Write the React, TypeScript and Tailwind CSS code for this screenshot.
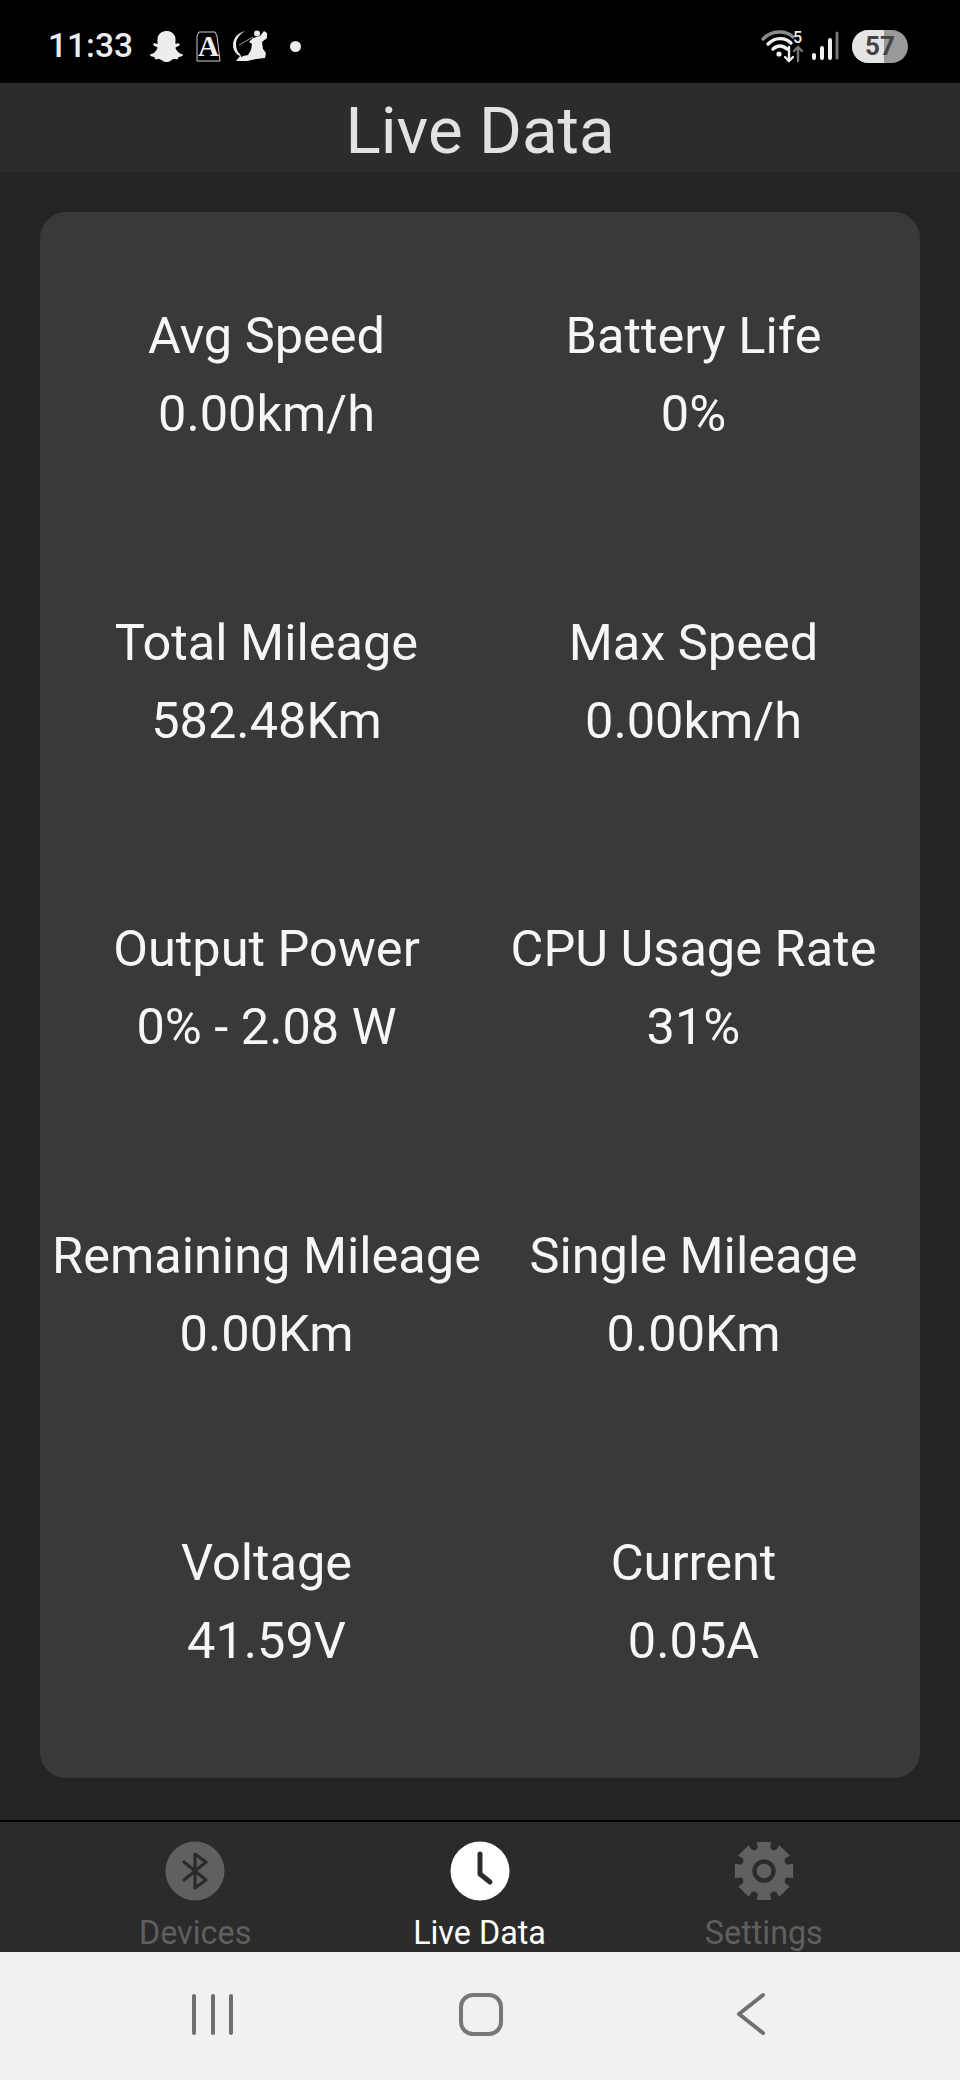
import React from "react";
import { FaSnapchatGhost } from "react-icons/fa";

const rows: [string, string, string, string][] = [
  ["Avg Speed", "0.00km/h", "Battery Life", "0%"],
  ["Total Mileage", "582.48Km", "Max Speed", "0.00km/h"],
  ["Output Power", "0% - 2.08 W", "CPU Usage Rate", "31%"],
  ["Remaining Mileage", "0.00Km", "Single Mileage", "0.00Km"],
  ["Voltage", "41.59V", "Current", "0.05A"],
];

function Cell({ label, value }: { label: string; value: string }) {
  return (
    <div className="flex h-[306.7px] flex-col items-center whitespace-nowrap pt-[67px] text-[50.5px] leading-[78px] text-[#f6f6f6]">
      <div>{label}</div>
      <div>{value}</div>
    </div>
  );
}

function Wifi() {
  return (
    <svg width="42" height="38" viewBox="0 0 42 38" fill="none" strokeLinecap="round">
      <path d="M2 12C11 3 25 3 32 10" stroke="#8a8a8a" strokeWidth="3.4" />
      <path d="M7 17C14 10 24 10 30 16" stroke="#f0f0f0" strokeWidth="3.4" />
      <path d="M12 22C16 18 22 18 26 22" stroke="#f0f0f0" strokeWidth="3.4" />
      <circle cx="18" cy="27" r="2.6" fill="#f0f0f0" />
      <path d="M28 20V34M24 30l4 4 4-4" stroke="#f0f0f0" strokeWidth="2.4" />
      <path d="M37 34V20M33 24l4-4 4 4" stroke="#777" strokeWidth="2.4" />
    </svg>
  );
}

function Golfer() {
  return (
    <svg width="35" height="32" viewBox="0 0 35 32" fill="#ededed">
      <path d="M12 1C4 3 0 9 0 15C0 20 3 24 7 26L3 31L10 31L7 24C4 22 3 18 3 14C3 9 7 4 12 1Z" />
      <path d="M20 8L27 6L31 1L34 3L34 8L29 12L30 19L33 23L32 28L23 29L14 31L4 31L10 26L15 25L18 20L19 14L16 12Z" />
      <circle cx="24" cy="3.5" r="3" />
      <path d="M6 15L20 7" stroke="#bbb" strokeWidth="0.8" />
    </svg>
  );
}

function gearPath(): string {
  const cx = 30;
  const cy = 30;
  const pts: string[] = [];
  const pt = (r: number, deg: number) => {
    const a = ((deg - 90) * Math.PI) / 180;
    return `${(cx + r * Math.cos(a)).toFixed(2)} ${(cy + r * Math.sin(a)).toFixed(2)}`;
  };
  for (let i = 0; i < 8; i++) {
    const c = i * 45;
    pts.push(pt(22.5, c - 22));
    pts.push(pt(24, c - 15));
    pts.push(pt(30, c - 14));
    pts.push(pt(30, c + 14));
    pts.push(pt(24, c + 15));
    pts.push(pt(22.5, c + 22));
  }
  const outer = "M" + pts.join("L") + "Z";
  return `${outer} M30 18.3a11.7 11.7 0 1 0 0.01 0Z M30 22.7a7.3 7.3 0 1 1-0.01 0Z`;
}

function NavItem({ icon, label, active }: { icon: React.ReactNode; label: string; active?: boolean }) {
  return (
    <div className="flex h-full flex-col items-center pt-[19px]">
      <div className="flex h-[60px] items-center justify-center">{icon}</div>
      <div className={`mt-[14px] text-[32.3px] leading-[36px] whitespace-nowrap ${active ? "text-white" : "text-[#5f5f5f]"}`}>{label}</div>
    </div>
  );
}

export default function App() {
  return (
    <div className="flex h-[2080px] w-[960px] flex-col overflow-hidden bg-[#242424] font-['Roboto',sans-serif]">
      <div className="flex h-[83px] shrink-0 items-center justify-between bg-black pl-[48px] pr-[52px] pt-[9px] text-[#ededed]">
        <div className="flex items-center">
          <span className="text-[33.5px] font-medium leading-none">11:33</span>
          <FaSnapchatGhost className="ml-[17px] text-[33px]" />
          <span className="relative ml-[13px] flex h-[31px] w-[25px] items-center justify-center font-['Liberation_Serif',serif] text-[29px] font-bold leading-none">
            <svg className="absolute inset-0" width="25" height="31" viewBox="0 0 25 31" fill="none">
              <path d="M3 1H19L21 5L24 30H1V5Z" stroke="#cfcfcf" strokeWidth="1" />
            </svg>
            A
          </span>
          <span className="ml-[12px] flex"><Golfer /></span>
          <span className="ml-[22px] h-[11px] w-[11px] rounded-full bg-[#ededed]" />
        </div>
        <div className="flex items-center">
          <div className="relative flex">
            <Wifi />
            <span className="absolute right-[1px] top-[3px] text-[16px] font-medium leading-none">5</span>
          </div>
          <svg className="ml-[8px]" width="28" height="30" viewBox="0 0 28 30" strokeLinecap="round">
            <path d="M3 24V27" stroke="#f0f0f0" strokeWidth="4" />
            <path d="M11 17V27" stroke="#f0f0f0" strokeWidth="4" />
            <path d="M19 9V27" stroke="#f0f0f0" strokeWidth="4" />
            <path d="M26 2V27" stroke="#777" strokeWidth="3" />
          </svg>
          <div className="relative ml-[13px] flex h-[33px] w-[56px] items-center justify-center overflow-hidden rounded-full bg-[#9a9a9a] text-[#444]">
            <div className="absolute bottom-0 left-0 top-0 w-[32px] bg-[#e4e4e4]" />
            <span className="relative text-[26px] font-bold leading-none">57</span>
          </div>
        </div>
      </div>

      <div className="flex h-[89px] shrink-0 items-center justify-center bg-[#2c2c2c] pt-[6px] text-[65.5px] leading-none text-[#e2e2e2]">Live Data</div>

      <div className="flex h-[1648px] shrink-0 flex-col px-[40px] pt-[40px]">
        <div className="grid h-[1566px] grid-cols-2 content-start rounded-[26px] bg-[#393939] px-[13px] pt-[18px]">
          {rows.map((r) => (
            <React.Fragment key={r[0]}>
              <Cell label={r[0]} value={r[1]} />
              <Cell label={r[2]} value={r[3]} />
            </React.Fragment>
          ))}
        </div>
      </div>

      <div className="grid h-[132px] shrink-0 grid-cols-3 border-t-2 border-t-black bg-[#2b2b2b] pl-[53px] pr-[54px]">
        <NavItem
          label="Devices"
          icon={
            <svg width="60" height="60" viewBox="0 0 60 60" fill="none">
              <circle cx="30" cy="30" r="29.5" fill="#606060" />
              <path d="M19 21L41 39L30 47V13L41 21L19 39" stroke="#2b2b2b" strokeWidth="3.2" strokeLinecap="round" strokeLinejoin="round" />
            </svg>
          }
        />
        <NavItem
          active
          label="Live Data"
          icon={
            <svg className="ml-[2px]" width="60" height="60" viewBox="0 0 60 60" fill="none">
              <circle cx="30" cy="30" r="29.5" fill="#fff" />
              <path d="M30 13V33L40 41" stroke="#2b2b2b" strokeWidth="5" strokeLinecap="round" strokeLinejoin="round" />
            </svg>
          }
        />
        <NavItem
          label="Settings"
          icon={
            <svg width="60" height="60" viewBox="0 0 60 60">
              <path fillRule="evenodd" fill="#606060" d={gearPath()} />
            </svg>
          }
        />
      </div>

      <div className="flex flex-1 items-start bg-[#f1f1f4] pl-[192px] pt-[40px]">
        <div className="flex items-center">
          <div className="flex h-[41px] w-[41px] justify-between">
            <span className="h-full w-[4px] rounded-full bg-[#6f6f6f]" />
            <span className="h-full w-[4px] rounded-full bg-[#6f6f6f]" />
            <span className="h-full w-[4px] rounded-full bg-[#6f6f6f]" />
          </div>
          <div className="ml-[226px] h-[43px] w-[44px] rounded-[14px] border-[4px] border-[#777]" />
          <svg className="ml-[233px]" width="30" height="44" viewBox="0 0 30 44" fill="none">
            <path d="M27 3L3 22L27 41" stroke="#707070" strokeWidth="4" strokeLinecap="round" strokeLinejoin="round" />
          </svg>
        </div>
      </div>
    </div>
  );
}
